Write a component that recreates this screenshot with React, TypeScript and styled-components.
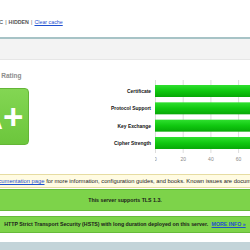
import React from "react";
import styled, { createGlobalStyle } from "styled-components";

const GlobalStyle = createGlobalStyle`
  html, body {
    margin: 0;
    padding: 0;
    background: #ffffff;
    overflow: hidden;
  }
  body {
    font-family: "Liberation Sans", Arial, sans-serif;
    color: #111;
  }
`;

const scores = [
  { label: "Certificate", value: 100 },
  { label: "Protocol Support", value: 100 },
  { label: "Key Exchange", value: 90 },
  { label: "Cipher Strength", value: 90 },
];

const UNIT = 1.385; // px per score point
const ROW = 17.33;

const App = () => {
  return (
    <>
      <GlobalStyle />
      <Viewport>
        <Column>
          <Meta>
            <MetaDate>Assessed on:&nbsp; Tue, 12 Mar 2024 09:41:17 UTC</MetaDate>
            <Sep>|</Sep>
            <Hidden>HIDDEN</Hidden>
            <Sep>|</Sep>
            <Link href="#">Clear cache</Link>
          </Meta>

          <TitleBar>
            <TitleText>Summary</TitleText>
          </TitleBar>

          <ReportBody>
            <RatingCol>
              <RatingTitle>Overall Rating</RatingTitle>
              <GradeBox>A+</GradeBox>
            </RatingCol>

            <Chart>
              <ChartLabels>
                {scores.map((s) => (
                  <ChartLabel key={s.label}>{s.label}</ChartLabel>
                ))}
              </ChartLabels>
              <svg width="150" height="82" style={{ marginLeft: 4, display: "block" }}>
                <defs>
                  <linearGradient id="bar" x1="0" y1="0" x2="0" y2="1">
                    <stop offset="0" stopColor="#2fe02f" />
                    <stop offset="0.5" stopColor="#10c810" />
                    <stop offset="1" stopColor="#06a806" />
                  </linearGradient>
                </defs>
                {[0, 20, 40, 60, 80, 100].map((t) => (
                  <g key={t}>
                    <line
                      x1={t * UNIT + 0.5}
                      x2={t * UNIT + 0.5}
                      y1={0}
                      y2={73}
                      stroke="#dcdcdc"
                      strokeWidth={1}
                    />
                    <text
                      x={t * UNIT + 0.5}
                      y={81}
                      fontSize={5}
                      fill="#8a8a8a"
                      textAnchor="middle"
                      fontFamily="Liberation Sans, Arial, sans-serif"
                    >
                      {t}
                    </text>
                  </g>
                ))}
                {scores.map((s, i) => (
                  <rect
                    key={s.label}
                    x={0}
                    y={5 + i * ROW}
                    width={s.value * UNIT}
                    height={12}
                    fill="url(#bar)"
                  />
                ))}
              </svg>
            </Chart>
          </ReportBody>

          <Notices>
            <Notice tone="info">
              Visit our <Link href="#">documentation page</Link> for more information,
              configuration guides, and books. Known issues are documented{" "}
              <Link href="#">here</Link>.
            </Notice>
            <Notice tone="good" $pad={6.3}>
              This server supports TLS 1.3.
            </Notice>
            <Notice tone="good" $pad={3.8}>
              HTTP Strict Transport Security (HSTS) with long duration deployed on this
              server. <MoreInfo href="#">MORE INFO »</MoreInfo>
            </Notice>
          </Notices>

          <NextSection />
        </Column>
      </Viewport>
    </>
  );
};

export default App;

const Viewport = styled.div`
  width: 250px;
  height: 250px;
  overflow: hidden;
  display: flex;
  justify-content: center;
`;

const Column = styled.div`
  flex: none;
  width: 500px;
  display: flex;
  flex-direction: column;
`;

const Meta = styled.div`
  display: flex;
  align-items: center;
  padding-top: 19px;
  height: 6px;
  font-size: 5.3px;
  line-height: 6px;
  white-space: nowrap;
  color: #333;
`;

const MetaDate = styled.div`
  width: 128px;
  display: flex;
  justify-content: flex-end;
`;

const Sep = styled.span`
  margin: 0 2px 0 2.2px;
  color: #555;
`;

const Hidden = styled.span`
  font-weight: bold;
  color: #555;
`;

const Link = styled.a`
  color: #1d4fcf;
  text-decoration: underline;
`;

const TitleBar = styled.div`
  margin-top: 12px;
  height: 24px;
  border-top: 2px solid #a7c3c6;
  border-bottom: 1px solid #e6e6e6;
  background: #f3f3f3;
  display: flex;
  align-items: center;
  padding-left: 10px;
`;

const TitleText = styled.span`
  font-size: 8px;
  font-weight: bold;
  color: #555;
`;

const ReportBody = styled.div`
  display: flex;
  align-items: flex-start;
  padding: 12px 0 0 97px;
`;

const RatingCol = styled.div`
  width: 57px;
  display: flex;
  flex-direction: column;
  align-items: center;
`;

const RatingTitle = styled.div`
  margin-left: -2px;
  font-size: 6.5px;
  line-height: 8px;
  font-weight: bold;
  color: #8c8c8c;
  white-space: nowrap;
`;

const GradeBox = styled.div`
  margin-top: 8px;
  box-sizing: border-box;
  width: 57px;
  height: 57px;
  border-radius: 4px;
  border: 1px solid #64b537;
  background: linear-gradient(#83d653, #6cc63c);
  display: flex;
  align-items: center;
  justify-content: center;
  color: #ffffff;
  font-size: 35px;
  font-weight: bold;
  line-height: 1;
`;

const Chart = styled.div`
  display: flex;
  margin: 8px 0 0 42px;
`;

const ChartLabels = styled.div`
  width: 80px;
  padding-top: 5px;
  display: flex;
  flex-direction: column;
`;

const ChartLabel = styled.div`
  height: 12px;
  margin-bottom: 5.33px;
  display: flex;
  align-items: center;
  justify-content: flex-end;
  font-size: 4.9px;
  font-weight: bold;
  color: #111;
  white-space: nowrap;
`;

const Notices = styled.div`
  display: flex;
  flex-direction: column;
  margin: 12px 20px 0;
`;

const Notice = styled.div<{ tone: "info" | "good"; $pad?: number }>`
  box-sizing: border-box;
  margin-bottom: ${(p) => (p.tone === "info" ? 1 : 5)}px;
  padding: ${(p) => (p.tone === "info" ? 2.5 : p.$pad ?? 4)}px 4px;
  border: 1px solid ${(p) => (p.tone === "info" ? "#e6dca2" : "#66bb3a")};
  background: ${(p) => (p.tone === "info" ? "#fffbe2" : "#7dd34a")};
  text-align: center;
  font-size: ${(p) => (p.tone === "info" ? 5.8 : 5.25)}px;
  line-height: 7px;
  font-weight: ${(p) => (p.tone === "info" ? "normal" : "bold")};
  color: #1a1a1a;
  white-space: nowrap;
`;

const MoreInfo = styled.a`
  margin-left: 2px;
  color: #1d4fcf;
  text-decoration: underline;
  font-weight: bold;
`;

const NextSection = styled.div`
  margin-top: 4px;
  height: 10px;
  background: #c3d4d9;
`;
